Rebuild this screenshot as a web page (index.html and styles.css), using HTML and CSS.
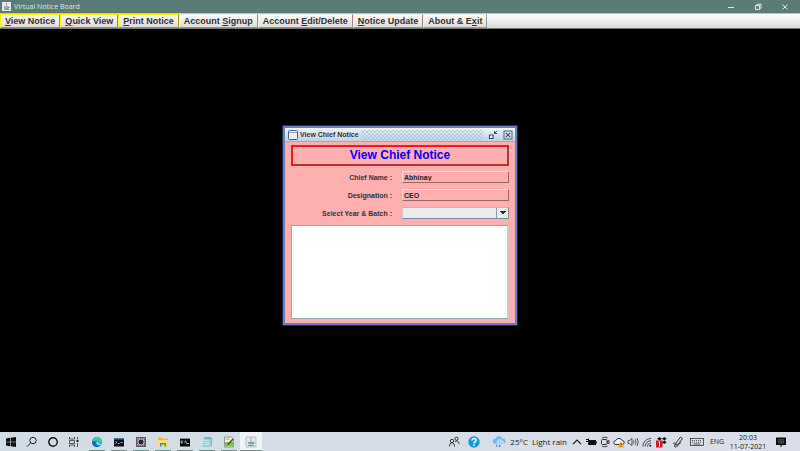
FILE: index.html
```html
<!DOCTYPE html>
<html lang="en">
<head>
  <meta charset="UTF-8">
  <title>Virtual Notice Board</title>
  <link rel="stylesheet" href="styles.css">
</head>
<body>

  <!-- main window title -->
  <header class="title-bar">
    <svg class="java-icon" viewBox="0 0 10 10"><rect width="10" height="10" fill="#e3e9ec"/><path d="M5.4 1C3.6 2.6 6.6 3 4.8 5" stroke="#d9783c" fill="none"/><path d="M2.5 5.5h4.2v1.6H3zM6.7 5.7h1.2v1H6.7M2 8.4h6" stroke="#4d7898" stroke-width=".8" fill="none"/></svg>
    <span class="app-name">Virtual Notice Board</span>
    <button class="win-btn" aria-label="Minimize"><svg viewBox="0 0 8 8"><path d="M1 4.5h6"/></svg></button>
    <button class="win-btn" aria-label="Restore"><svg viewBox="0 0 8 8"><path d="M1.5 2.5h4v4h-4zM3 2.5V1.2h4v4H5.5"/></svg></button>
    <button class="win-btn" aria-label="Close"><svg viewBox="0 0 8 8"><path d="M1.5 1.5l5 5M6.5 1.5l-5 5"/></svg></button>
  </header>

  <nav class="menu-bar">
    <button class="menu-btn yellow"><u>V</u>iew Notice</button>
    <button class="menu-btn yellow"><u>Q</u>uick View</button>
    <button class="menu-btn yellow"><u>P</u>rint Notice</button>
    <button class="menu-btn">Account <u>S</u>ignup</button>
    <button class="menu-btn">Account <u>E</u>dit/Delete</button>
    <button class="menu-btn"><u>N</u>otice Update</button>
    <button class="menu-btn last">About &amp; E<u>x</u>it</button>
  </nav>

  <main class="desktop">
    <section class="frame">
      <div class="frame-title">
        <svg class="frame-icon" viewBox="0 0 10 10"><rect x=".5" y=".5" width="9" height="9" rx="1" fill="#eef1f5" stroke="#536078"/><path d="M1 2.5h8" stroke="#8ba0bd"/></svg>
        <span>View Chief Notice</span>
        <div class="bumps"></div>
        <button class="frame-btn" aria-label="Minimize"><svg viewBox="0 0 10 10"><path d="M1.500 5h3.500v3.500H1.500z" fill="#fff" stroke="#3c4a66" stroke-width="1.200"/><path d="M6.500 1v2.500H9M6.500 3.500L9 .8" fill="none" stroke="#3c4a66"/></svg></button>
        <button class="frame-btn" aria-label="Close"><svg viewBox="0 0 10 10"><rect x="1" y="1" width="8" height="8" fill="#d7e2ef" stroke="#536078"/><path d="M2.8 2.8l4.4 4.4M7.2 2.8L2.8 7.2" stroke="#3c4a66" stroke-width="1.1"/></svg></button>
      </div>
      <form class="notice-form">
        <h1>View Chief Notice</h1>
        <div class="row">
          <label for="chief">Chief Name :</label>
          <input type="text" id="chief" value="Abhinay" readonly>
        </div>
        <div class="row">
          <label for="designation">Designation :</label>
          <input type="text" id="designation" value="CEO" readonly>
        </div>
        <div class="row">
          <label for="batch">Select Year &amp; Batch :</label>
          <select id="batch"><option></option></select>
        </div>
        <textarea aria-label="Notice" readonly></textarea>
      </form>
    </section>
  </main>

  <footer class="taskbar">
    <div class="launchers">
      <button aria-label="Start"><svg viewBox="0 0 12 12"><path d="M1 2.4l4-.6v3.9H1zM5.6 1.7L11 1v4.7H5.6zM1 6.3h4v3.9l-4-.6zM5.6 6.3H11V11l-5.4-.7z" fill="#111"/></svg></button>
      <button aria-label="Search"><svg viewBox="0 0 12 12"><g fill="none" stroke="#222"><circle cx="7" cy="4.5" r="3.2"/><path d="M4.7 6.9L1 10.7"/></g></svg></button>
      <button aria-label="Cortana"><svg viewBox="0 0 12 12"><circle cx="6" cy="6" r="4.2" fill="none" stroke="#111" stroke-width="1.4"/></svg></button>
      <button aria-label="Task view"><svg viewBox="0 0 12 12"><path d="M1.5 1v2h5V1M1.5 11V9h5v2M1.5 4.5h5v3h-5zM9.5 1v2.5M9.5 7v4" fill="none" stroke="#333" stroke-width=".8"/><path d="M8.5 4h2v2h-2z" fill="#222"/></svg></button>
    </div>
    <div class="apps">
      <button aria-label="Edge"><svg viewBox="0 0 12 12"><circle cx="6" cy="6" r="5" fill="#168bd3"/><path d="M1 6a5 5 0 0 1 10-.5C11 8 8 8 7.2 7.5 8 5 5 4 3 5.200 2 5.500 1.300 6 1 6z" fill="#42c6a5"/><path d="M4.200 6C3.500 9 6 10.500 8.500 10.400A5 5 0 0 1 1.100 6.500C1.500 5 3.500 5 4.200 6z" fill="#1261ac"/><path d="M6 5.500c-1 1-.5 3 1.500 3.200 1.500.1 2.500-.4 3-1-1.500.4-2.900.2-3.500-.5z" fill="#e5f4fa"/></svg></button>
      <button aria-label="Command Prompt"><svg viewBox="0 0 12 12"><path d="M1 2h10v8.500H1z" fill="#0a0f16"/><path d="M1 2h10v1.500H1z" fill="#3d74bb"/><path d="M2.500 5.500l1.300 1-1.300 1M5 7.500h1.500M7.500 6.500h2" fill="none" stroke="#dde" stroke-width=".8"/></svg></button>
      <button aria-label="Eclipse"><svg viewBox="0 0 12 12"><path d="M1 1h10v10H1z" fill="#60566c"/><path d="M2 3h8M2 9h8M3 2v8M9 2v8" stroke="#c6bfce" stroke-dasharray="1 1"/><circle cx="6" cy="6" r="3" fill="#292239" stroke="#d3cddd" stroke-width=".8"/></svg></button>
      <button aria-label="File Explorer"><svg viewBox="0 0 12 12"><path d="M1 1.500h3.500l1 1H11v8H1z" fill="#f3b82f"/><path d="M1 4h10v6.500H1z" fill="#ffdc75"/><path d="M3 10.500V7h6v3.500H7.500v-2h-3v2z" fill="#2f8ed6"/></svg></button>
      <button aria-label="Command Prompt"><svg viewBox="0 0 12 12"><path d="M1 2h10v8.500H1z" fill="#080808"/><path d="M1 2h10v1H1z" fill="#888"/><path d="M3.800 5H2.200v2h1.600M5.200 5v.5M5.200 6.500V7M6.500 4.500l1 3M8 7.500h2" fill="none" stroke="#eee" stroke-width=".8"/></svg></button>
      <button aria-label="Notepad"><svg viewBox="0 0 12 12"><path d="M3 1.500h7.500L9.500 11H1.500z" fill="#9ccfdd"/><path d="M3 1.500h7.500v1H3z" fill="#688999"/><path d="M3.500 4.500h5M3.200 6.500h5M3 8.500h5" stroke="#c7edf5" stroke-width=".8"/><path d="M10.500 2v7l-1 2" fill="none" stroke="#b0a98c"/></svg></button>
      <button aria-label="Notepad++"><svg viewBox="0 0 12 12"><path d="M1.500 1h7l2 2v8h-9z" fill="#f3f3e7" stroke="#777" stroke-width=".7"/><path d="M2 6h8v4.500H2z" fill="#7bc943"/><path d="M4 8.500l5.500-6 1.200 1L5.500 9z" fill="#514840"/><path d="M2.500 3h4" stroke="#cf9548"/></svg></button>
      <button class="active" aria-label="Java"><svg viewBox="0 0 12 12"><path d="M1 1h10v10H1z" fill="#e2e6ea" stroke="#a4acb4" stroke-width=".7"/><path d="M6.500 1.800c-2.500 2 1 2-.8 4" fill="none" stroke="#df8354"/><path d="M3.500 6.500h4v1.300H4zM7.600 6.600H9v1H7.500M3 9.500h6" fill="none" stroke="#55809e" stroke-width=".8"/></svg></button>
    </div>

    <div class="tray">
      <button class="wide" aria-label="People"><svg viewBox="0 0 12 12"><g fill="none" stroke="#222" stroke-width=".9"><circle cx="4" cy="5" r="1.700"/><path d="M1.500 10.500c0-5 5-5 5 0"/><circle cx="8.500" cy="2.700" r="1.600"/><path d="M7 5.800c2-1.500 4-.5 4 2"/></g></svg></button>
      <button class="wide" aria-label="Help"><svg viewBox="0 0 12 12"><circle cx="6" cy="6" r="5.700" fill="#129bd6"/><path d="M4 4.500c0-2.600 4-2.500 4 0 0 1.500-2 1.400-2 3M6 8.500V10" fill="none" stroke="#fff" stroke-width="1.500"/></svg></button>
      <button class="weather">
        <svg viewBox="0 0 14 12"><path d="M3.500 8a2.700 2.700 0 0 1 0-5.400 3.700 3.700 0 0 1 7-.2 2.800 2.800 0 0 1 .5 5.600z" fill="#72baf0"/><path d="M5 8a2 2 0 0 1 .5-3.500 3 3 0 0 1 5.300 0A1.800 1.800 0 0 1 11 8z" fill="#a9d8f7"/><path d="M5 9l-.7 1.500M8 8.800L7.300 11" stroke="#2b7fd2" stroke-width="1.200"/></svg>
        <span>25°C</span>
        <span>Light rain</span>
      </button>
      <button aria-label="Show hidden icons"><svg viewBox="0 0 12 12"><path d="M2 8l4-4 4 4" fill="none" stroke="#222" stroke-width="1.100"/></svg></button>
      <button aria-label="Battery"><svg viewBox="0 0 12 12"><path d="M4 4h7v5H4z" fill="#111"/><path d="M1 3.500h3M1 5.500h3M3.500 2.500v4M3.500 6.500v2h2M11.300 5.500v2" fill="none" stroke="#111"/></svg></button>
      <button aria-label="Meet now"><svg viewBox="0 0 12 12"><g fill="none" stroke="#222" stroke-width=".9"><rect x="2.500" y="3.500" width="5.500" height="5" rx="1"/><path d="M8 5.500l2-1v3l-2-1M3 2c1.500-1 4-1 5.500 0M3 10c1.500 1 4 1 5.500 0"/></g></svg></button>
      <button aria-label="OneDrive"><svg viewBox="0 0 12 12"><path d="M2.800 8.500a2 2 0 0 1 0-4 3.500 3.500 0 0 1 6.400 0 2 2 0 0 1 0 4z" fill="#f2f2f2" stroke="#333"/><path d="M8 5l3.500 6.500h-7z" fill="#f6b51b"/><path d="M8 7.200v2M8 9.800v.7" stroke="#222" stroke-width=".8"/></svg></button>
      <button aria-label="Volume"><svg viewBox="0 0 12 12"><path d="M1 4.500h1.500L5 2.500v7l-2.500-2H1zM6.500 4.500q1 1.500 0 3M8.200 3.200q1.800 2.800 0 5.600M10 2q2.500 4 0 8" fill="none" stroke="#333" stroke-width=".8"/></svg></button>
      <button aria-label="Wi-Fi"><svg viewBox="0 0 12 12"><g fill="none" stroke="#333" stroke-width=".9"><path d="M2 10.500C2 6 5.500 2.500 10 2.500M4.200 10.500c0-3 2.800-5.800 5.800-5.800M6.500 10.500c0-2 1.500-3.500 3.500-3.500"/></g><circle cx="9.300" cy="9.700" r="1" fill="#222"/></svg></button>
      <button aria-label="Dropbox"><svg viewBox="0 0 12 12"><path d="M4.500 1L7 2.700 4.500 4.400 2 2.700zM9.300 1l2.400 1.700-2.400 1.700L7 2.700zM9.300 4.500l2.400 1.700-2.400 1.700L7 6.200z" fill="#111"/><path d="M1 4.500h6.500v7H1z" fill="#d91422"/><path d="M3.500 6.500l1-1v5" fill="none" stroke="#fff"/></svg></button>
      <button class="wide" aria-label="Windows Ink"><svg viewBox="0 0 12 12"><path d="M4 7l4.500-6 2 1.500L6 8.500l-2.200.7zM1 8c1-1.500 3-1.500 2 .5s-.5 3 1.500 2.200S7 7 9 6.500" fill="none" stroke="#222" stroke-width=".9"/></svg></button>
      <button class="keyboard" aria-label="Touch keyboard"><svg viewBox="0 0 16 12"><rect x="1.500" y="2.500" width="13" height="7" fill="none" stroke="#333" stroke-width=".8"/><path d="M3 4.500h10M3 6.200h10" stroke="#333" stroke-width=".8" stroke-dasharray="1 1"/><path d="M4.500 8h7" stroke="#333" stroke-width=".8"/></svg></button>
      <button class="lang">ENG</button>
      <button class="clock"><span>20:03</span><span>11-07-2021</span></button>
      <button class="notify" aria-label="Notifications"><svg viewBox="0 0 12 12"><path d="M1 1.500h10v7.500H7.500L5.500 11.500V9H1z" fill="#111"/><path d="M3 3.800h6M3 5.300h6M3 6.800h6" stroke="#888" stroke-width=".6"/></svg></button>
    </div>
  </footer>

</body>
</html>
```
FILE: styles.css
```css
* {
  box-sizing: border-box;
}

body {
  margin: 0;
  min-height: 100vh;
  display: flex;
  flex-direction: column;
  background-color: #000;
  color: #333;
  font-family: "Liberation Sans", Arial, sans-serif;
}

button {
  margin: 0;
  padding: 0;
  border: none;
  background: none;
  font-family: inherit;
  color: inherit;
}

svg {
  display: block;
}

/* title bar */
.title-bar {
  display: flex;
  align-items: center;
  height: 13px;
  padding-right: 2px;
  background-color: #5b7c76;
}

.java-icon {
  width: 9px;
  height: 9px;
  margin: 0 3px 0 2px;
}

.app-name {
  flex: 1;
  color: #dfe6e4;
  font-family: "Open Sans", sans-serif;
  font-size: 7px;
  line-height: 12px;
}

.win-btn {
  width: 27px;
  height: 13px;
  display: flex;
  align-items: center;
  justify-content: center;
}

.win-btn svg {
  width: 8px;
  height: 8px;
  fill: none;
  stroke: #dfe8e6;
}

/* menu */
.menu-bar {
  display: flex;
  height: 16px;
  border-top: 1px solid #b9c8c5;
  border-bottom: 1px solid #777;
  background: linear-gradient(#fff, #dadada);
}

.menu-btn {
  padding: 1px 4px 0;
  border: 1px solid #eee;
  border-right-color: #a98585;
  border-bottom-color: #a98585;
  font-size: 9px;
  font-weight: bold;
  line-height: 11px;
  white-space: nowrap;
}

.menu-btn.yellow {
  border-color: #ffff00 #a59a00 #a59a00 #ffff00;
}

.menu-btn.last {
  border-right-color: #999;
  border-bottom-color: #999;
}

.desktop {
  flex: 1;
  display: flex;
  align-items: center;
  justify-content: center;
  padding-bottom: 10px;
}

/* inner frame */
.frame {
  width: 236px;
  border: 3px solid #6382bf;
  outline: 1px solid #242d49;
  outline-offset: -1px;
  background-color: #ffafaf;
}

.frame-title {
  display: flex;
  align-items: center;
  height: 14px;
  padding: 0 2px 0 3px;
  border-bottom: 1px solid #9aabc7;
  background: linear-gradient(#f1f6fb, #bed2e6);
  font-size: 7px;
  font-weight: bold;
}

.frame-icon {
  width: 10px;
  height: 10px;
  margin-right: 2px;
}

.bumps {
  flex: 1;
  height: 10px;
  margin: 0 0 0 2px;
  background-image: radial-gradient(#b4cae0 1px, transparent 1px), radial-gradient(#b4cae0 1px, transparent 1px);
  background-size: 4px 4px;
  background-position: 0 0, 2px 2px;
}

.frame-btn {
  margin-left: 5px;
}

.frame-btn svg {
  width: 10px;
  height: 10px;
}

.notice-form {
  padding: 3px 6px 4px;
}

h1 {
  margin: 0 0 5px;
  border: 2px solid;
  border-color: #e81c1c #b93333 #b93333 #e81c1c;
  color: #0000ff;
  font-size: 12px;
  line-height: 17px;
  text-align: center;
}

.row {
  display: grid;
  grid-template-columns: 101px 1fr;
  column-gap: 10px;
  align-items: center;
  margin-bottom: 6px;
  font-size: 7px;
  font-weight: bold;
}

.row label {
  text-align: right;
}

.row input,
.row select {
  width: 100%;
  height: 12px;
  margin: 0;
  padding: 0 1px;
  border: 1px solid;
  border-radius: 0;
  color: #222;
  font: bold 7px "Liberation Sans", Arial, sans-serif;
}

.row input {
  border-color: #ffd5d5 #996969 #996969 #ffd5d5;
  background-color: #ffafaf;
}

/* arrow and divider of the drop-down */
.row select {
  appearance: none;
  border-color: #c9b5b5 #8a8a8a #7a8a99 #d5cccc;
  background-color: #e9ecef;
  background-image: linear-gradient(45deg, transparent 50%, #333 50%), linear-gradient(-45deg, transparent 50%, #333 50%), linear-gradient(#8d9bac, #8d9bac);
  background-position: right 5px top 3px, right 2px top 3px, right 11px top;
  background-size: 3px 4px, 3px 4px, 1px 100%;
  background-repeat: no-repeat;
}

textarea {
  display: block;
  width: 100%;
  height: 94px;
  margin: 0;
  border: 1px solid #9aa4ad;
  border-right: 2px solid #ccc;
  background-color: #fff;
  resize: none;
}

/* taskbar */
.taskbar {
  display: flex;
  justify-content: space-between;
  height: 19px;
  background: linear-gradient(90deg, #d2dce5, #dbdee8);
  color: #222;
  font-family: "Open Sans", sans-serif;
}

.launchers,
.apps,
.tray {
  display: flex;
}

.launchers button {
  width: 21px;
}

.apps {
  margin: 0 auto 0 2px;
}

.apps button {
  width: 22px;
  border: solid transparent;
  border-width: 0 3px;
  background: linear-gradient(#6f8f8b, #6f8f8b) bottom / 100% 1px no-repeat;
  background-clip: padding-box;
}

.apps button.active {
  border-width: 0;
  background-color: #f1f4f7;
}

.taskbar svg {
  width: 12px;
  height: 12px;
  margin: 0 auto;
}

.tray {
  padding-right: 6px;
}

.tray button {
  width: 14px;
  font-size: 7px;
}

.tray .wide {
  width: 20px;
}

.tray .weather {
  display: flex;
  align-items: center;
  gap: 4px;
  width: auto;
  margin: 0 3px 0 8px;
  font-size: 8px;
  white-space: nowrap;
}

.weather svg {
  width: 14px;
}

.tray .keyboard {
  width: 18px;
}

.keyboard svg {
  width: 16px;
}

.tray .lang {
  width: 22px;
}

.tray .clock {
  width: 40px;
  line-height: 9px;
}

.clock span {
  display: block;
}

.tray .notify {
  width: 26px;
}
```
